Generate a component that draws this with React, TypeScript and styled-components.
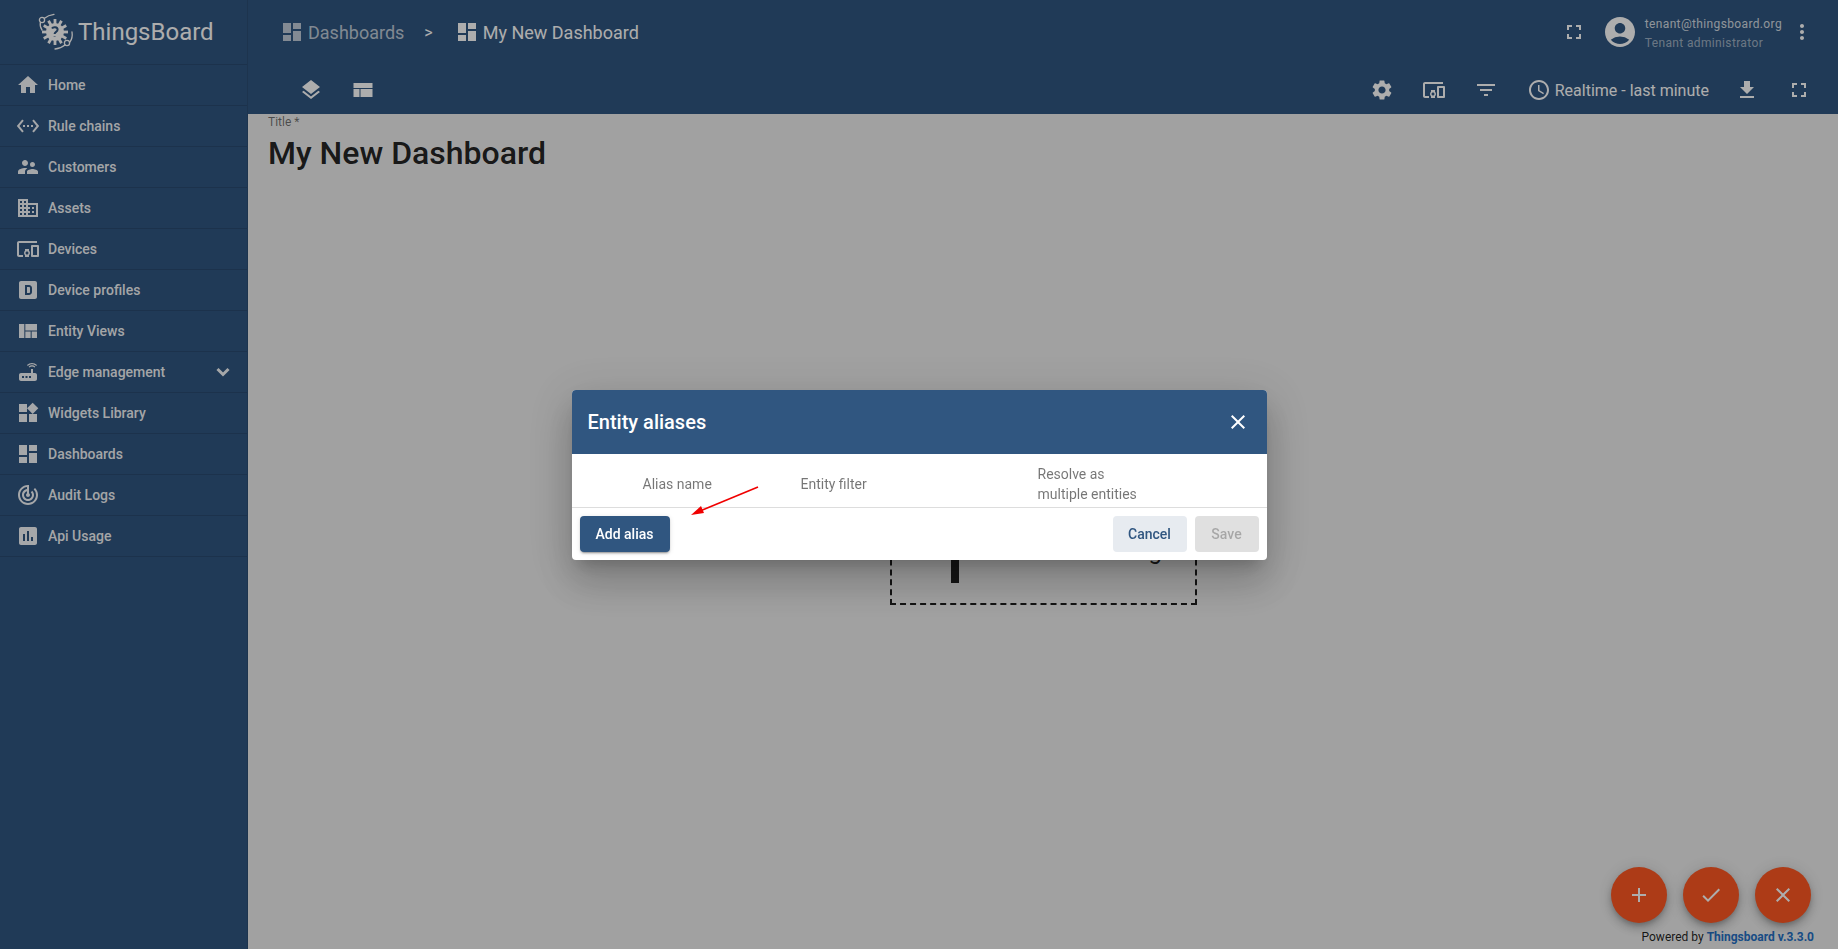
import React from 'react';
import styled, { createGlobalStyle } from 'styled-components';
import {
  MdAccessTime,
  MdAccountCircle,
  MdAdd,
  MdCheck,
  MdClose,
  MdDashboard,
  MdDevicesOther,
  MdDomain,
  MdFileDownload,
  MdFilterList,
  MdFullscreen,
  MdHome,
  MdInsertChart,
  MdLayers,
  MdMoreVert,
  MdRouter,
  MdSettings,
  MdSettingsEthernet,
  MdSupervisorAccount,
  MdTrackChanges,
  MdViewQuilt,
  MdWidgets,
} from 'react-icons/md';

const GlobalStyle = createGlobalStyle`
  html, body {
    margin: 0;
    height: 100%;
    overflow: hidden;
    font-family: Roboto, "Helvetica Neue", sans-serif;
  }
  #root {
    height: 100%;
  }
`;

const ProfileIcon = () => (
  <svg width="24" height="24" viewBox="0 0 24 24" fill="currentColor">
    <path
      fillRule="evenodd"
      d="M5 3H19C20.1 3 21 3.9 21 5V19C21 20.1 20.1 21 19 21H5C3.9 21 3 20.1 3 19V5C3 3.9 3.9 3 5 3ZM9 7V17H13C14.66 17 16 15.66 16 14V10C16 8.34 14.66 7 13 7H9ZM11 9H13C13.55 9 14 9.45 14 10V14C14 14.55 13.55 15 13 15H11V9Z"
    />
  </svg>
);

const LayoutIcon = () => (
  <svg width="24" height="24" viewBox="0 0 24 24" fill="currentColor">
    <path d="M2.5 5h19v5h-19zM2.5 11h6v8h-6zM9.5 11h12v8h-12z" />
  </svg>
);

const ChevronIcon = () => (
  <svg width="24" height="24" viewBox="0 0 24 24" fill="none" stroke="currentColor" strokeWidth="3">
    <path d="M6.5 9l5.5 5.5 5.5-5.5" />
  </svg>
);

const Logo = () => (
  <svg width="38" height="38" viewBox="0 0 38 38">
    <g fill="none" stroke="currentColor" strokeWidth="1.3" strokeLinecap="round">
      <circle cx="5" cy="7" r="2.6" />
      <path d="M7.5 5.2C10 3.2 13 2 17 1.4" />
      <path d="M3.4 9.2C2.8 12 3.5 15 5 17" />
      <circle cx="30" cy="30" r="2.6" />
      <path d="M33 29C35 26 35.5 22 35 19" />
      <path d="M28 32C25 34.5 22 35.6 18 36" />
    </g>
    <g fill="currentColor">
      <circle cx="18" cy="19" r="9" />
      {[0, 30, 60, 90, 120, 150].map((a) => (
        <rect key={a} x="16.6" y="6" width="2.8" height="26" transform={`rotate(${a} 18 19)`} />
      ))}
    </g>
    <path
      d="M15 15.5C16 13.6 20.6 13.8 20.6 16.6C20.6 19 17.6 18.8 17.6 21M17.6 23.4V24"
      fill="none"
      stroke="#305680"
      strokeWidth="2"
    />
  </svg>
);

type NavEntry = { label: string; icon: React.ReactNode; expandable?: boolean };

const navItems: NavEntry[] = [
  { label: 'Home', icon: <MdHome /> },
  { label: 'Rule chains', icon: <MdSettingsEthernet /> },
  { label: 'Customers', icon: <MdSupervisorAccount /> },
  { label: 'Assets', icon: <MdDomain /> },
  { label: 'Devices', icon: <MdDevicesOther /> },
  { label: 'Device profiles', icon: <ProfileIcon /> },
  { label: 'Entity Views', icon: <MdViewQuilt /> },
  { label: 'Edge management', icon: <MdRouter />, expandable: true },
  { label: 'Widgets Library', icon: <MdWidgets /> },
  { label: 'Dashboards', icon: <MdDashboard /> },
  { label: 'Audit Logs', icon: <MdTrackChanges /> },
  { label: 'Api Usage', icon: <MdInsertChart /> },
];

export default function App() {
  return (
    <>
      <GlobalStyle />
      <Page>
        <Sidebar>
          <LogoRow>
            <Logo />
            <LogoText>ThingsBoard</LogoText>
          </LogoRow>
          {navItems.map((item) => (
            <NavRow key={item.label}>
              <NavIcon>{item.icon}</NavIcon>
              <NavLabel>{item.label}</NavLabel>
              {item.expandable ? (
                <Chevron>
                  <ChevronIcon />
                </Chevron>
              ) : null}
            </NavRow>
          ))}
        </Sidebar>

        <Main>
          <TopBar>
            <Crumb $dim>
              <MdDashboard />
              <span>Dashboards</span>
            </Crumb>
            <CrumbSeparator>&gt;</CrumbSeparator>
            <Crumb>
              <MdDashboard />
              <span>My New Dashboard</span>
            </Crumb>
            <Spacer />
            <TopIcon>
              <MdFullscreen />
            </TopIcon>
            <Avatar>
              <MdAccountCircle />
            </Avatar>
            <UserInfo>
              <UserName>tenant@thingsboard.org</UserName>
              <UserRole>Tenant administrator</UserRole>
            </UserInfo>
            <TopIcon>
              <MdMoreVert />
            </TopIcon>
          </TopBar>

          <ToolBar>
            <ToolButton>
              <MdLayers />
            </ToolButton>
            <ToolButton>
              <LayoutIcon />
            </ToolButton>
            <Spacer />
            <ToolButton>
              <MdSettings />
            </ToolButton>
            <ToolButton>
              <MdDevicesOther />
            </ToolButton>
            <ToolButton>
              <MdFilterList />
            </ToolButton>
            <TimeWindow>
              <MdAccessTime />
              <span>Realtime - last minute</span>
            </TimeWindow>
            <ToolButton>
              <MdFileDownload />
            </ToolButton>
            <ToolButton>
              <MdFullscreen />
            </ToolButton>
          </ToolBar>

          <Content>
            <TitleLabel>Title *</TitleLabel>
            <DashboardTitle>My New Dashboard</DashboardTitle>
            <Canvas>
              <EmptyBox>
                <MdAdd />
                <EmptyText>Add new widget</EmptyText>
              </EmptyBox>
            </Canvas>
            <Footer>
              Powered by <FooterLink>Thingsboard v.3.3.0</FooterLink>
            </Footer>
            <FabRow>
              <Fab>
                <MdAdd />
              </Fab>
              <Fab>
                <MdCheck />
              </Fab>
              <Fab>
                <MdClose />
              </Fab>
            </FabRow>
          </Content>
        </Main>
      </Page>

      <Backdrop>
        <Dialog>
          <DialogHeader>
            <DialogTitle>Entity aliases</DialogTitle>
            <MdClose />
          </DialogHeader>
          <AliasHead>
            <span>Alias name</span>
            <span>Entity filter</span>
            <span>
              Resolve as
              <br />
              multiple entities
            </span>
          </AliasHead>
          <DialogActions>
            <PrimaryButton>Add alias</PrimaryButton>
            <Spacer />
            <CancelButton>Cancel</CancelButton>
            <SaveButton disabled>Save</SaveButton>
          </DialogActions>
        </Dialog>
        <Arrow width="80" height="40" viewBox="0 0 80 40">
          <line x1="72" y1="4" x2="14" y2="28" stroke="#f00000" strokeWidth="1.6" />
          <polygon points="5,32 15,23 18,30" fill="#f00000" />
        </Arrow>
      </Backdrop>
    </>
  );
}

const Page = styled.div`
  display: flex;
  height: 100%;
  background: #eeeeee;
`;

const Sidebar = styled.nav`
  width: 248px;
  flex: none;
  box-sizing: border-box;
  background: #305680;
  border-right: 1px solid rgba(0, 0, 0, 0.1);
  color: rgba(255, 255, 255, 0.95);
`;

const LogoRow = styled.div`
  height: 65px;
  box-sizing: border-box;
  display: flex;
  align-items: center;
  padding: 0 0 0 37px;
  gap: 3px;
  border-bottom: 1px solid rgba(0, 0, 0, 0.12);
  color: #ffffff;
`;

const LogoText = styled.span`
  font-size: 24px;
  font-weight: 400;
`;

const NavRow = styled.div`
  height: 41px;
  box-sizing: border-box;
  display: flex;
  align-items: center;
  padding-left: 16px;
  border-bottom: 1px solid rgba(0, 0, 0, 0.12);
`;

const NavIcon = styled.span`
  width: 24px;
  height: 24px;
  margin-right: 8px;
  font-size: 24px;
  display: flex;

  svg {
    display: block;
  }
`;

const NavLabel = styled.span`
  flex: 1;
  font-size: 14px;
  font-weight: 500;
`;

const Chevron = styled.span`
  display: flex;
  margin-right: 12px;
`;

const Main = styled.div`
  flex: 1;
  min-width: 0;
  display: flex;
  flex-direction: column;
`;

const TopBar = styled.header`
  height: 64px;
  flex: none;
  display: flex;
  align-items: center;
  padding: 0 24px 0 32px;
  background: #305680;
  color: #ffffff;
`;

const Crumb = styled.div<{ $dim?: boolean }>`
  display: flex;
  align-items: center;
  gap: 4px;
  font-size: 18px;
  color: ${(p) => (p.$dim ? 'rgba(255, 255, 255, 0.7)' : '#ffffff')};

  svg {
    width: 24px;
    height: 24px;
  }
`;

const CrumbSeparator = styled.span`
  margin: 0 22px 0 20px;
  font-size: 16px;
`;

const Spacer = styled.div`
  flex: 1;
`;

const TopIcon = styled.span`
  display: flex;
  font-size: 24px;
`;

const Avatar = styled.span`
  display: flex;
  font-size: 36px;
  margin: 0 7px 0 16px;
`;

const UserInfo = styled.div`
  display: flex;
  flex-direction: column;
  gap: 4px;
  padding-top: 3px;
  margin-right: 8px;
  font-size: 12px;
  line-height: 15px;
  letter-spacing: 0.36px;
`;

const UserName = styled.span`
  color: rgba(255, 255, 255, 0.8);
`;

const UserRole = styled.span`
  color: rgba(255, 255, 255, 0.55);
`;

const ToolBar = styled.div`
  height: 50px;
  flex: none;
  display: flex;
  align-items: center;
  padding: 2px 13px 0 37px;
  box-sizing: border-box;
  background: #305680;
  color: #ffffff;
`;

const ToolButton = styled.span`
  width: 52px;
  height: 40px;
  display: flex;
  align-items: center;
  justify-content: center;
  font-size: 24px;
`;

const TimeWindow = styled.div`
  display: flex;
  align-items: center;
  gap: 4px;
  padding: 0 12px 0 15px;
  font-size: 16px;
  color: #ffffff;

  svg {
    width: 24px;
    height: 24px;
  }
`;

const Content = styled.main`
  position: relative;
  flex: 1;
  min-height: 0;
  display: flex;
  flex-direction: column;
  padding: 1px 0 0 20px;
`;

const TitleLabel = styled.div`
  font-size: 12px;
  line-height: 14px;
  color: rgba(0, 0, 0, 0.54);
`;

const DashboardTitle = styled.h1`
  margin: 4px 0 0;
  font-size: 32px;
  line-height: 40px;
  font-weight: 500;
  color: rgba(0, 0, 0, 0.87);
`;

const Canvas = styled.div`
  flex: 1;
  display: flex;
  align-items: center;
  justify-content: center;
  padding: 0 20px 38px 0;
`;

const EmptyBox = styled.div`
  width: 307px;
  height: 144px;
  box-sizing: border-box;
  display: flex;
  align-items: flex-end;
  padding: 0 0 0 15px;
  border: 2px dashed rgba(0, 0, 0, 0.87);
  color: rgba(0, 0, 0, 0.87);

  svg {
    width: 96px;
    height: 96px;
    flex: none;
  }
`;

const EmptyText = styled.span`
  margin-left: 10px;
  font-size: 24px;
  line-height: 103px;
  white-space: nowrap;
`;

const Footer = styled.div`
  font-size: 12px;
  line-height: 14px;
  height: 19px;
  text-align: right;
  padding-right: 24px;
  color: rgba(0, 0, 0, 0.87);
`;

const FooterLink = styled.span`
  font-weight: 700;
  color: #2570c4;
`;

const FabRow = styled.div`
  position: absolute;
  right: 27px;
  bottom: 26px;
  display: flex;
  gap: 16px;
`;

const Fab = styled.button`
  width: 56px;
  height: 56px;
  padding: 0;
  display: flex;
  align-items: center;
  justify-content: center;
  border: none;
  border-radius: 50%;
  background: #ff5722;
  color: #ffffff;
  font-size: 24px;
  box-shadow: 0 3px 5px -1px rgba(0, 0, 0, 0.2), 0 6px 10px rgba(0, 0, 0, 0.14),
    0 1px 18px rgba(0, 0, 0, 0.12);
`;

const Backdrop = styled.div`
  position: fixed;
  inset: 0;
  box-sizing: border-box;
  padding-top: 1px;
  display: flex;
  align-items: center;
  justify-content: center;
  background: rgba(0, 0, 0, 0.32);
`;

const Dialog = styled.div`
  width: 695px;
  height: 170px;
  display: flex;
  flex-direction: column;
  overflow: hidden;
  border-radius: 4px;
  background: #ffffff;
  box-shadow: 0 11px 15px -7px rgba(0, 0, 0, 0.2), 0 24px 38px 3px rgba(0, 0, 0, 0.14),
    0 9px 46px 8px rgba(0, 0, 0, 0.12);
`;

const DialogHeader = styled.div`
  height: 64px;
  flex: none;
  display: flex;
  align-items: center;
  justify-content: space-between;
  padding: 0 17px 0 16px;
  background: #305680;
  color: #ffffff;

  svg {
    width: 24px;
    height: 24px;
  }
`;

const DialogTitle = styled.h2`
  margin: 0;
  font-size: 20px;
  font-weight: 500;
`;

const AliasHead = styled.div`
  height: 54px;
  flex: none;
  box-sizing: border-box;
  display: grid;
  grid-template-columns: 158px 237px 1fr;
  align-items: center;
  padding: 6px 0 0 71px;
  border-bottom: 1px solid #dddddd;
  font-size: 14px;
  line-height: 20px;
  color: rgba(0, 0, 0, 0.54);
`;

const DialogActions = styled.div`
  flex: 1;
  display: flex;
  align-items: center;
  gap: 8px;
  padding: 0 8px;
`;

const BaseButton = styled.button`
  height: 36px;
  padding: 0;
  border: none;
  border-radius: 4px;
  font-family: inherit;
  font-size: 14px;
  font-weight: 500;
`;

const PrimaryButton = styled(BaseButton)`
  width: 90px;
  background: #305680;
  color: #ffffff;
  box-shadow: 0 3px 1px -2px rgba(0, 0, 0, 0.2), 0 2px 2px rgba(0, 0, 0, 0.14),
    0 1px 5px rgba(0, 0, 0, 0.12);
`;

const CancelButton = styled(BaseButton)`
  width: 74px;
  background: #e7ebf0;
  color: #305680;
`;

const SaveButton = styled(BaseButton)`
  width: 64px;
  background: #e0e0e0;
  color: rgba(0, 0, 0, 0.26);
`;

const Arrow = styled.svg`
  position: absolute;
  left: 686px;
  top: 483px;
`;
